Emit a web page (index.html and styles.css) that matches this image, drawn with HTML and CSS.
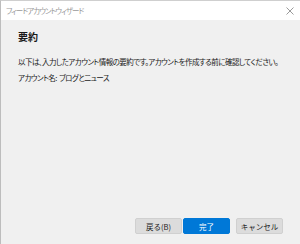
FILE: index.html
```html
<!DOCTYPE html>
<html>
<head>
    <title>フィードアカウントウィザード</title>
    <link rel="stylesheet" href="styles.css">
</head>
<body>
    <div class="window">
        <div class="titlebar">
            <span class="title">フィードアカウントウィザード</span>
            <svg class="close" width="8" height="8" viewBox="0 0 8 8">
                <path d="M0.5 0.5 L7.5 7.5 M7.5 0.5 L0.5 7.5" stroke="#9a9a9a" stroke-width="1"/>
            </svg>
        </div>
        <div class="content">
            <h1 class="heading">要約</h1>
            <p class="desc">以下は、入力したアカウント情報の要約です。アカウントを作成する前に確認してください。</p>
            <p class="desc">アカウント名:&nbsp; ブログとニュース</p>
        </div>
        <div class="buttons">
            <button class="btn">戻る(B)</button>
            <button class="btn primary">完了</button>
            <button class="btn cancel">キャンセル</button>
        </div>
    </div>
</body>
</html>
```

FILE: styles.css
```css
html, body {
    margin: 0;
    height: 100%;
}

body {
    font-family: "Noto Sans CJK JP", "Noto Sans", sans-serif;
    font-feature-settings: "palt";
    color: #1a1a1a;
}

.window {
    height: 100%;
    box-sizing: border-box;
    display: flex;
    flex-direction: column;
    background: #f0f0f0;
    border-top: 1px solid #cfcfcf;
    border-left: 1px solid #bdbdbd;
}

.titlebar {
    height: 19px;
    background: #fff;
    display: flex;
    align-items: center;
    justify-content: space-between;
    padding: 0 6px 0 5px;
}

.title {
    font-size: 7.5px;
    letter-spacing: -1px;
    color: #9a9a9a;
}

.content {
    flex: 1;
    padding: 10px 0 0 17px;
}

.heading {
    margin: 0 0 13px;
    font-size: 10px;
    font-weight: bold;
    line-height: 14px;
}

.desc {
    margin: 0 0 6px;
    font-size: 7.5px;
    letter-spacing: -0.55px;
    line-height: 10px;
    white-space: nowrap;
}

.buttons {
    display: flex;
    justify-content: flex-end;
    padding: 0 17px 10px 0;
}

.btn {
    width: 47px;
    height: 16px;
    padding: 0;
    margin-left: 1px;
    font-family: inherit;
    font-size: 7.5px;
    color: #1a1a1a;
    background: #dcdcdc;
    border: 1px solid #d0d0d0;
    border-radius: 2px;
}

.btn.primary {
    background: #0078d7;
    border-color: #0078d7;
    color: #fff;
}

.btn.cancel {
    margin-left: 6px;
}
```
